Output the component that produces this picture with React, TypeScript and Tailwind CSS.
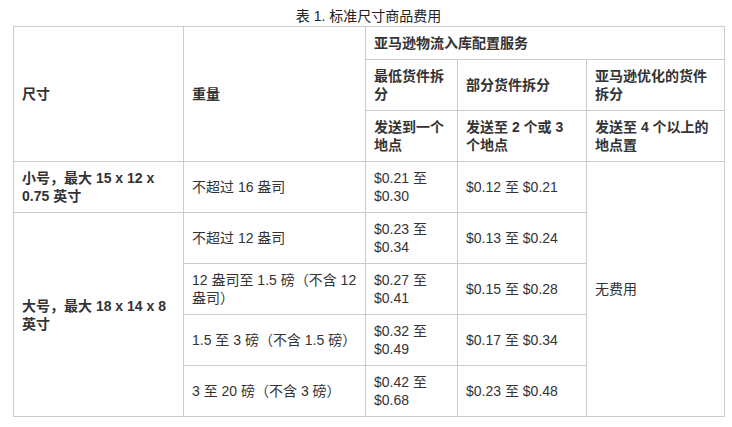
import React from "react";

const font = { fontFamily: '"Liberation Sans", Arial, "Noto Sans CJK SC", sans-serif' };

export default function App() {
  const td = "border border-[#cccccc] px-2 align-middle";
  return (
    <div className="w-[732px] h-[427px] bg-white text-[14px] leading-[18px] text-[#333333]" style={font}>
      <div className="pt-[7px] pl-[13px] w-[724px] text-center text-[14px] leading-[18px] text-[#222]">表 1. 标准尺寸商品费用</div>
      <table className="ml-[13px] mt-px border-collapse table-fixed w-[711px]">
        <colgroup>
          <col className="w-[170px]" />
          <col className="w-[182px]" />
          <col className="w-[92px]" />
          <col className="w-[129px]" />
          <col className="w-[138px]" />
        </colgroup>
        <thead>
          <tr className="h-[33px]">
            <th rowSpan={3} className={`${td} text-left font-bold`}>尺寸</th>
            <th rowSpan={3} className={`${td} text-left font-bold`}>重量</th>
            <th colSpan={3} className={`${td} text-left font-bold`}>亚马逊物流入库配置服务</th>
          </tr>
          <tr className="h-[51px]">
            <th className={`${td} text-left font-bold`}>最低货件拆分</th>
            <th className={`${td} text-left font-bold`}>部分货件拆分</th>
            <th className={`${td} text-left font-bold`}>亚马逊优化的货件拆分</th>
          </tr>
          <tr className="h-[51px]">
            <th className={`${td} text-left font-bold`}>发送到一个地点</th>
            <th className={`${td} text-left font-bold`}>发送至 2 个或 3 个地点</th>
            <th className={`${td} text-left font-bold`}>发送至 4 个以上的地点置</th>
          </tr>
        </thead>
        <tbody>
          <tr className="h-[51px]">
            <td className={`${td} font-bold`}>小号，最大 15 x 12 x 0.75 英寸</td>
            <td className={td}>不超过 16 盎司</td>
            <td className={td}>$0.21 至 $0.30</td>
            <td className={td}>$0.12 至 $0.21</td>
            <td rowSpan={5} className={td}>无费用</td>
          </tr>
          <tr className="h-[51px]">
            <td rowSpan={4} className={`${td} font-bold`}>大号，最大 18 x 14 x 8 英寸</td>
            <td className={td}>不超过 12 盎司</td>
            <td className={td}>$0.23 至 $0.34</td>
            <td className={td}>$0.13 至 $0.24</td>
          </tr>
          <tr className="h-[51px]">
            <td className={td}>12 盎司至 1.5 磅（不含 12 盎司）</td>
            <td className={td}>$0.27 至 $0.41</td>
            <td className={td}>$0.15 至 $0.28</td>
          </tr>
          <tr className="h-[51px]">
            <td className={td}>1.5 至 3 磅（不含 1.5 磅）</td>
            <td className={td}>$0.32 至 $0.49</td>
            <td className={td}>$0.17 至 $0.34</td>
          </tr>
          <tr className="h-[51px]">
            <td className={td}>3 至 20 磅（不含 3 磅）</td>
            <td className={td}>$0.42 至 $0.68</td>
            <td className={td}>$0.23 至 $0.48</td>
          </tr>
        </tbody>
      </table>
    </div>
  );
}
